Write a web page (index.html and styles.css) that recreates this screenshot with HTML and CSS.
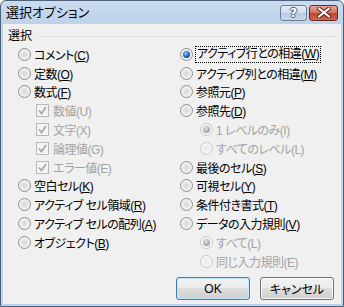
FILE: index.html
```html
<!DOCTYPE html>
<html lang="ja">
<head>
  <meta charset="UTF-8" />
  <title>選択オプション</title>
  <link rel="stylesheet" href="styles.css">
</head>
<body>

  <div class="window">
    <div class="titlebar">
      <span class="title">選択オプション</span>
      <div class="caption-buttons">
        <span class="cap help">?</span>
        <span class="cap close">
          <svg width="14" height="11" viewBox="0 0 14 11">
            <path d="M2 1.5 L12 9.5 M12 1.5 L2 9.5" stroke="#5a1d1d" stroke-width="4" stroke-linecap="round"/>
            <path d="M2 1.5 L12 9.5 M12 1.5 L2 9.5" stroke="#fff" stroke-width="2.2" stroke-linecap="round"/>
          </svg>
        </span>
      </div>
    </div>

    <div class="client">
      <div class="group-label">
        <span>選択</span>
        <span class="rule"></span>
      </div>

      <div class="options">
        <ul class="col">
          <li class="item"><span class="radio"></span><span>コメント(<u>C</u>)</span></li>
          <li class="item"><span class="radio"></span><span>定数(<u>O</u>)</span></li>
          <li class="item"><span class="radio"></span><span>数式(<u>F</u>)</span></li>
          <li class="item sub disabled"><span class="check"><svg width="11" height="11" viewBox="0 0 11 11"><path d="M2 5.5 L4.5 8.5 L9 2" fill="none" stroke="#a9a9a9" stroke-width="1.8"/></svg></span><span>数値(U)</span></li>
          <li class="item sub disabled"><span class="check"><svg width="11" height="11" viewBox="0 0 11 11"><path d="M2 5.5 L4.5 8.5 L9 2" fill="none" stroke="#a9a9a9" stroke-width="1.8"/></svg></span><span>文字(X)</span></li>
          <li class="item sub disabled"><span class="check"><svg width="11" height="11" viewBox="0 0 11 11"><path d="M2 5.5 L4.5 8.5 L9 2" fill="none" stroke="#a9a9a9" stroke-width="1.8"/></svg></span><span>論理値(G)</span></li>
          <li class="item sub disabled"><span class="check"><svg width="11" height="11" viewBox="0 0 11 11"><path d="M2 5.5 L4.5 8.5 L9 2" fill="none" stroke="#a9a9a9" stroke-width="1.8"/></svg></span><span>エラー値(E)</span></li>
          <li class="item"><span class="radio"></span><span>空白セル(<u>K</u>)</span></li>
          <li class="item"><span class="radio"></span><span>アクティブ セル領域(<u>R</u>)</span></li>
          <li class="item"><span class="radio"></span><span>アクティブ セルの配列(<u>A</u>)</span></li>
          <li class="item"><span class="radio"></span><span>オブジェクト(<u>B</u>)</span></li>
        </ul>

        <ul class="col">
          <li class="item"><span class="radio checked"></span><span class="focus">アクティブ行との相違(<u>W</u>)</span></li>
          <li class="item"><span class="radio"></span><span>アクティブ列との相違(<u>M</u>)</span></li>
          <li class="item"><span class="radio"></span><span>参照元(<u>P</u>)</span></li>
          <li class="item"><span class="radio"></span><span>参照先(<u>D</u>)</span></li>
          <li class="item sub-radio disabled"><span class="radio checked"></span><span>1 レベルのみ(I)</span></li>
          <li class="item sub-radio disabled"><span class="radio"></span><span>すべてのレベル(L)</span></li>
          <li class="item"><span class="radio"></span><span>最後のセル(<u>S</u>)</span></li>
          <li class="item"><span class="radio"></span><span>可視セル(<u>Y</u>)</span></li>
          <li class="item"><span class="radio"></span><span>条件付き書式(<u>T</u>)</span></li>
          <li class="item"><span class="radio"></span><span>データの入力規則(<u>V</u>)</span></li>
          <li class="item sub-radio disabled"><span class="radio checked"></span><span>すべて(L)</span></li>
          <li class="item sub-radio disabled"><span class="radio"></span><span>同じ入力規則(E)</span></li>
        </ul>
      </div>

      <div class="actions">
        <button class="btn default">OK</button>
        <button class="btn">キャンセル</button>
      </div>
    </div>
  </div>

</body>
</html>
```

FILE: styles.css
```css
* {
  margin: 0;
  padding: 0;
  box-sizing: border-box;
}

body {
  font-family: "Liberation Sans", "Noto Sans CJK JP", sans-serif;
  font-size: 12px;
  font-feature-settings: "palt";
  color: #000;
  background: #fff;
}

.window {
  width: 344px;
  height: 307px;
  border: 1px solid #4d617b;
  border-radius: 6px 6px 0 0;
  background: linear-gradient(#cbdcf0, #bed2ea 22px, #bed2ea);
  padding: 0 2px 2px;
  display: flex;
  flex-direction: column;
}

/* タイトルバー */
.titlebar {
  height: 23px;
  display: flex;
  align-items: center;
  padding: 0 3px 0 3px;
}

.title {
  flex: 1;
  font-size: 13px;
  line-height: 16px;
}

.caption-buttons {
  display: flex;
  gap: 2px;
}

.cap {
  height: 16px;
  border: 1px solid #6d7f96;
  border-radius: 3px;
  display: flex;
  align-items: center;
  justify-content: center;
}

.help {
  width: 27px;
  background: linear-gradient(#e4edf7, #cfdcec 50%, #b9cbe1 50%, #c7d7ea);
  color: #fff;
  font-family: "DejaVu Sans", sans-serif;
  font-weight: bold;
  font-size: 13px;
  line-height: 14px;
  text-shadow: 1px 0 #4a5c75, -1px 0 #4a5c75, 0 1px #4a5c75, 0 -1px #4a5c75;
}

.close {
  width: 29px;
  border-color: #6b2a2a;
  background: linear-gradient(#e8a593, #d56d5c 50%, #c2402f 50%, #d0664f);
}

/* 本体 */
.client {
  flex: 1;
  background: #f0f0f0;
  display: flex;
  flex-direction: column;
}

.group-label {
  display: flex;
  align-items: center;
  margin-top: 5px;
  padding: 0 6px 0 5px;
  line-height: 14px;
}

.group-label .rule {
  flex: 1;
  height: 1px;
  background: #d5dfe5;
  margin-left: 6px;
}

.options {
  display: grid;
  grid-template-columns: 162px 1fr;
  padding-left: 15px;
  margin-top: 2px;
}

.col {
  list-style: none;
}

.item {
  height: 18.8px;
  display: flex;
  align-items: center;
  gap: 3px;
  white-space: nowrap;
  letter-spacing: -0.5px;
}

.item u {
  text-decoration: underline;
  text-underline-offset: 1px;
}

.item.sub {
  margin-left: 18px;
  gap: 4px;
}

.item.sub-radio {
  margin-left: 20px;
  gap: 3px;
}

.disabled {
  color: #a3a3a3;
}

.focus {
  outline: 1px dotted #000;
  padding: 0 1px;
  line-height: 15px;
}

.radio {
  width: 13px;
  height: 13px;
  flex: none;
  border-radius: 50%;
  border: 1px solid #8e8f8f;
  background: radial-gradient(circle at 50% 50%, #d8d8d8 0, #e6e6e6 3px, #f6f6f6 6px);
  display: grid;
  place-items: center;
}

.radio.checked::after {
  content: "";
  width: 7px;
  height: 7px;
  border-radius: 50%;
  background: radial-gradient(circle at 40% 35%, #a8dbff 0, #3c8ad8 2px, #174f98 4px);
}

.disabled .radio {
  border-color: #c8c8c8;
  background: radial-gradient(circle at 50% 50%, #e6e6e6 0, #efefef 3px, #f8f8f8 6px);
}

.disabled .radio.checked::after {
  background: radial-gradient(circle at 40% 35%, #e0e0e0 0, #b4b4b4 3px, #a2a2a2 4px);
}

.check {
  width: 13px;
  height: 13px;
  flex: none;
  border: 1px solid #b8b8b8;
  background: #f4f4f4;
  display: grid;
  place-items: center;
}

/* ボタン */
.actions {
  margin-top: auto;
  display: flex;
  justify-content: flex-end;
  gap: 10px;
  padding: 0 7px 4px;
}

.btn {
  width: 74px;
  height: 23px;
  font-family: inherit;
  font-size: 12px;
  font-feature-settings: "palt";
  border: 1px solid #707070;
  border-radius: 3px;
  background: linear-gradient(#f2f2f2, #ebebeb 50%, #dddddd 50%, #cfcfcf);
  box-shadow: inset 0 0 0 1px #fcfcfc;
  color: #000;
}

.btn.default {
  border-color: #3c7fb1;
  box-shadow: inset 0 0 0 1px #bfe6fb;
}
```
